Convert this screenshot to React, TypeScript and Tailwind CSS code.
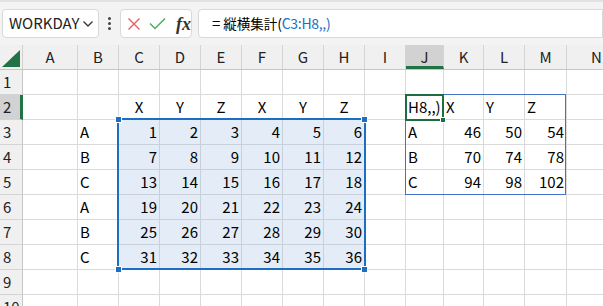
import React from 'react';

const columns = [
  { key: 'A', w: 'w-[55px]' },
  { key: 'B', w: 'w-[41px]' },
  { key: 'C', w: 'w-[41px]' },
  { key: 'D', w: 'w-[41px]' },
  { key: 'E', w: 'w-[41px]' },
  { key: 'F', w: 'w-[41px]' },
  { key: 'G', w: 'w-[41px]' },
  { key: 'H', w: 'w-[41px]' },
  { key: 'I', w: 'w-[41px]' },
  { key: 'J', w: 'w-[38px]' },
  { key: 'K', w: 'w-[40px]' },
  { key: 'L', w: 'w-[41px]' },
  { key: 'M', w: 'w-[42px]' },
  { key: 'N', w: 'w-[60px]' },
];

// A..N per row
const rows: string[][] = [
  ['', '', '', '', '', '', '', '', '', '', '', '', '', ''],
  ['', '', 'X', 'Y', 'Z', 'X', 'Y', 'Z', '', 'H8,,)', 'X', 'Y', 'Z', ''],
  ['', 'A', '1', '2', '3', '4', '5', '6', '', 'A', '46', '50', '54', ''],
  ['', 'B', '7', '8', '9', '10', '11', '12', '', 'B', '70', '74', '78', ''],
  ['', 'C', '13', '14', '15', '16', '17', '18', '', 'C', '94', '98', '102', ''],
  ['', 'A', '19', '20', '21', '22', '23', '24', '', '', '', '', '', ''],
  ['', 'B', '25', '26', '27', '28', '29', '30', '', '', '', '', '', ''],
  ['', 'C', '31', '32', '33', '34', '35', '36', '', '', '', '', '', ''],
  ['', '', '', '', '', '', '', '', '', '', '', '', '', ''],
  ['', '', '', '', '', '', '', '', '', '', '', '', '', ''],
];

function Cell({ w, text, row, col }: { w: string; text: string; row: number; col: number }) {
  const inSel = row >= 3 && row <= 8 && col >= 2 && col <= 7;
  const isNum = /^\d+$/.test(text);
  const centered = row === 2 && col >= 2 && col <= 7;
  const justify = isNum ? 'justify-end' : centered ? 'justify-center' : 'justify-start';
  return (
    <div
      className={`${w} h-full shrink-0 flex items-center px-[2px] border-r border-b whitespace-nowrap ${justify} ${
        inSel ? 'bg-[#e3ecf7] border-[#c8d0da]' : 'bg-white border-[#dadada]'
      }`}
    >
      {text}
    </div>
  );
}

export default function App() {
  return (
    <div className="relative w-[603px] h-[306px] overflow-hidden bg-white text-[15px] text-black font-['Noto_Sans_CJK_JP',sans-serif]">
      {/* Formula bar */}
      <div className="h-[45px] bg-[#f3f3f3] border-t-2 border-[#e2e2e2] flex items-center pl-[2px]">
        <div className="w-[100px] h-[29px] bg-white border border-[#d9d9d9] rounded-[4px] flex items-center justify-between pl-[6px] pr-[4px] text-[#222]">
          <span>WORKDAY</span>
          <svg width="12" height="8" viewBox="0 0 12 8" fill="none" stroke="#333" strokeWidth="1.3">
            <path d="M1.5 1.5l4.5 4.5 4.5-4.5" />
          </svg>
        </div>
        <div className="w-[22px] flex flex-col items-center gap-[2px]">
          <span className="w-[3px] h-[3px] bg-[#444] rounded-full" />
          <span className="w-[3px] h-[3px] bg-[#444] rounded-full" />
          <span className="w-[3px] h-[3px] bg-[#444] rounded-full" />
        </div>
        <div className="w-[72px] h-[29px] bg-white border border-[#d9d9d9] rounded-[4px] flex items-center pl-[6px] gap-[8px]">
          <svg width="14" height="14" viewBox="0 0 14 14" stroke="#e45c5c" strokeWidth="1.4">
            <path d="M1.5 1.5l11 11M12.5 1.5l-11 11" />
          </svg>
          <svg width="17" height="13" viewBox="0 0 17 13" fill="none" stroke="#4cae5b" strokeWidth="1.5">
            <path d="M1 6.5l5 5L16 1.5" />
          </svg>
          <span className="font-['Liberation_Serif',serif] italic font-bold text-[18px] leading-none text-[#333] ml-[2px]">fx</span>
        </div>
        <div className="ml-[6px] w-[420px] h-[29px] bg-white border border-[#d9d9d9] rounded-l-[4px] flex items-center pl-[13px]">
          <span className="mr-[3px]">=</span>
          <span className="text-[13.5px]">縦横集計</span>
          <span className="text-[14px] tracking-[-0.3px]">(</span>
          <span className="text-[14px] tracking-[-0.3px] text-[#1a6ec4]">C3:H8,,)</span>
        </div>
      </div>

      {/* Column headers */}
      <div className="flex h-[25px] bg-[#f0f0f0] border-b border-[#c6c6c6]">
        <div className="w-[23px] shrink-0 border-r border-[#cfcfcf] flex items-end justify-end pr-[2px] pb-[2px]">
          <svg width="18" height="17" viewBox="0 0 18 17">
            <path d="M18 0L18 17L0 17Z" fill="#217346" />
          </svg>
        </div>
        {columns.map((c) => (
          <div
            key={c.key}
            className={`${c.w} shrink-0 border-r border-[#d4d4d4] flex items-center justify-center text-[#222] ${
              c.key === 'J' ? 'bg-[#d2d2d2] border-b-[3px] border-b-[#217346] pt-[3px]' : ''
            }`}
          >
            {c.key}
          </div>
        ))}
      </div>

      {/* Rows */}
      {rows.map((r, i) => {
        const rowNo = i + 1;
        return (
          <div key={rowNo} className="flex h-[25px]">
            <div
              className={`w-[23px] shrink-0 border-b border-[#d4d4d4] flex items-center pl-[3px] text-[#222] ${
                rowNo === 2 ? 'bg-[#d2d2d2] border-r-[3px] border-r-[#217346]' : 'bg-[#f0f0f0] border-r border-r-[#c6c6c6]'
              }`}
            >
              {rowNo}
            </div>
            {columns.map((c, j) => (
              <Cell key={c.key} w={c.w} text={r[j]} row={rowNo} col={j} />
            ))}
          </div>
        );
      })}

      {/* Spill range outline J2:M5 */}
      <div className="absolute left-[405px] top-[94px] w-[161px] h-[101px] border border-[#4472c4]" />

      {/* Reference highlight C3:H8 */}
      <div className="absolute left-[117px] top-[118px] w-[249px] h-[152px] border-2 border-[#1b6ec2]" />
      <div className="absolute left-[115px] top-[116px] w-[7px] h-[7px] bg-[#1b6ec2] border border-white" />
      <div className="absolute left-[361px] top-[116px] w-[7px] h-[7px] bg-[#1b6ec2] border border-white" />
      <div className="absolute left-[115px] top-[266px] w-[7px] h-[7px] bg-[#1b6ec2] border border-white" />
      <div className="absolute left-[361px] top-[266px] w-[7px] h-[7px] bg-[#1b6ec2] border border-white" />

      {/* Active cell J2 */}
      <div className="absolute left-[405px] top-[94px] w-[39px] h-[27px] border-2 border-[#1e6c41]" />
      <div className="absolute left-[440px] top-[117px] w-[6px] h-[6px] bg-[#1e6c41] border border-white" />
    </div>
  );
}
